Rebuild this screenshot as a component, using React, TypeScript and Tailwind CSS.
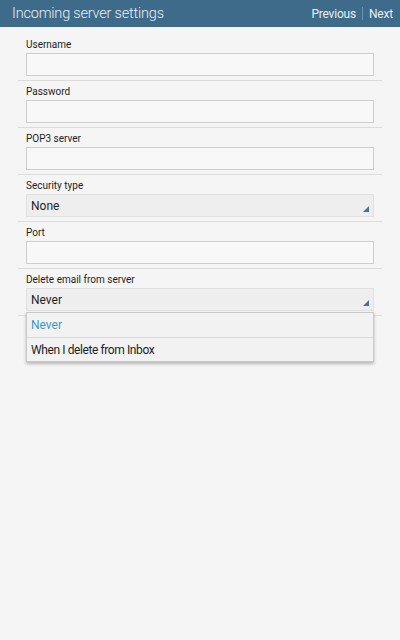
import React from "react";

// --- champs du formulaire ---

const font = { fontFamily: "Roboto, 'Noto Sans', sans-serif" };

const Label = ({ children }: { children: React.ReactNode }) => (
    <div className="h-[19px] pl-[8px] pt-[5px] text-[10px] leading-[12px] text-[#1e1e1e]">{children}</div>
);

const TextField = ({ label }: { label: string }) => (
    <div className="border-b border-[#dcdcdc] pb-[4px]">
        <Label>{label}</Label>
        <div className="mx-[8px] h-[23px] border border-[#cdcdcd] bg-[#f8f8f8]"></div>
    </div>
);

const Triangle = () => (
    <svg width="6" height="6" viewBox="0 0 6 6" className="absolute right-[4px] bottom-[4px]">
        <polygon points="6,0 6,6 0,6" fill="#4f7089" />
    </svg>
);

const SelectField = ({ label, value }: { label: string; value: string }) => (
    <div className="border-b border-[#dcdcdc] pb-[4px]">
        <Label>{label}</Label>
        <div className="relative mx-[8px] flex h-[23px] items-center border border-[#e0e0e0] bg-[#eeeeee] pl-[4px] text-[12px] text-[#1e1e1e]">
            {value}
            <Triangle />
        </div>
    </div>
);

export default function App() {
    return (
        <div className="h-[640px] w-[400px] overflow-hidden bg-[#f5f5f5]" style={font}>
            {/* Barre de titre */}
            <div className="flex h-[27px] items-center justify-between bg-[#3e6b8a] pl-[12px] pr-[7px] text-[#e8eff3]">
                <span className="text-[14.5px] font-light tracking-[-0.2px]">Incoming server settings</span>
                <div className="flex items-center text-[12px] tracking-[-0.2px]">
                    <span>Previous</span>
                    <div className="mx-[6px] h-[13px] w-px bg-[#6f93ab]"></div>
                    <span>Next</span>
                </div>
            </div>

            <div className="relative mx-[18px] pt-[7px]">
                <TextField label="Username" />
                <TextField label="Password" />
                <TextField label="POP3 server" />
                <SelectField label="Security type" value="None" />
                <TextField label="Port" />
                <SelectField label="Delete email from server" value="Never" />

                {/* Menu déroulant ouvert */}
                <div className="absolute left-[8px] right-[8px] top-[285px] border border-[#c8c8c8] bg-[#f2f2f2] text-[12px] shadow-[0_2px_3px_rgba(0,0,0,0.25)]">
                    <div className="flex h-[25px] items-center border-b border-[#dadada] pl-[4px] text-[#3a9cbd]">Never</div>
                    <div className="flex h-[23px] items-center pl-[4px] tracking-[-0.4px] text-[#1e1e1e]">When I delete from Inbox</div>
                </div>
            </div>
        </div>
    );
}
